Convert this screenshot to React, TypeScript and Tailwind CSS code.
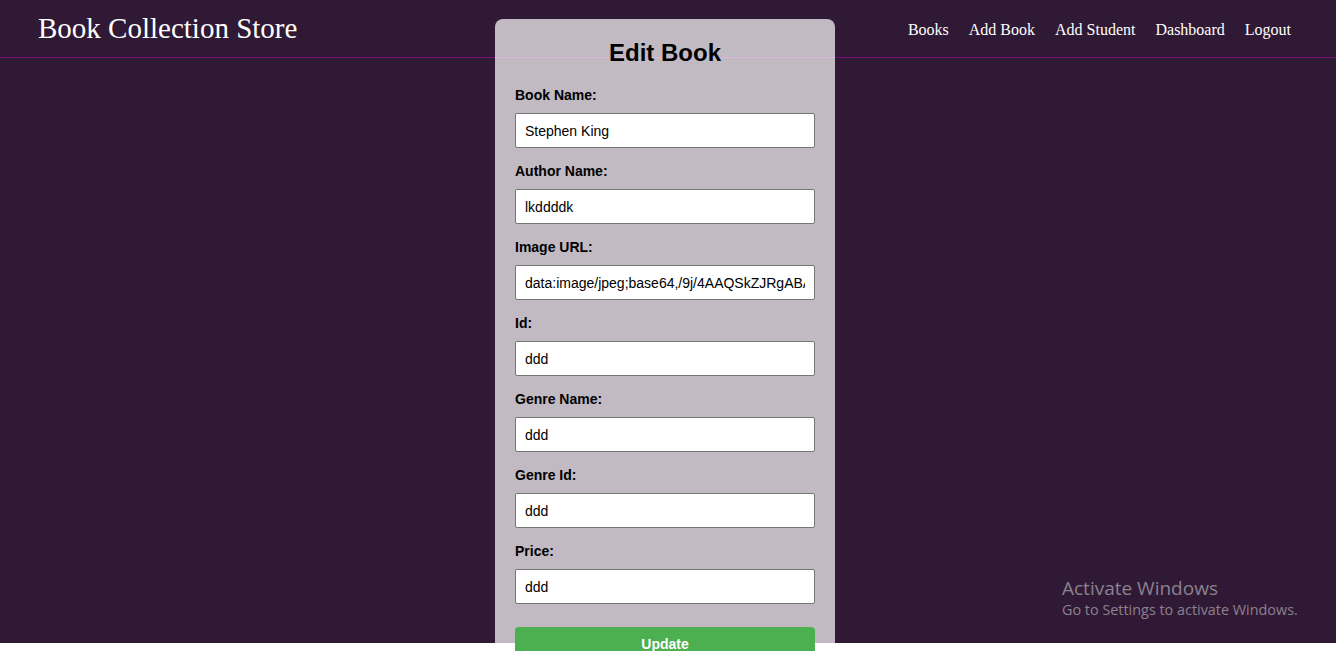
import React from 'react';

const fields = [
  { label: 'Book Name:', value: 'Stephen King' },
  { label: 'Author Name:', value: 'lkddddk' },
  { label: 'Image URL:', value: 'data:image/jpeg;base64,/9j/4AAQSkZJRgABAQAAAQABAAD/2wCEAAkGBxMTEhUTExMWFhUXGBgYGBgYGBgYGBgYGBgYGBgYGBgYHSggGBolHRgYITEhJSkrLi4uFx8zODMtNygtLisBCgoKDg0OGhAQGi0lHyUtLS0tLS0tLS0tLS0tLS0tLS0tLS0tLS0tLS0tLS0tLS0tLS0tLS0tLS0tLS0tLS0tLf' },
  { label: 'Id:', value: 'ddd' },
  { label: 'Genre Name:', value: 'ddd' },
  { label: 'Genre Id:', value: 'ddd' },
  { label: 'Price:', value: 'ddd' },
];

function Navbar() {
  const links = ['Books', 'Add Book', 'Add Student', 'Dashboard', 'Logout'];
  return (
    <nav className="h-[58px] border-b border-[#7a0f7a] flex items-center justify-between pl-[38px] pr-[45px] font-['Liberation_Serif',serif] text-white">
      <div className="text-[29px] leading-none">Book Collection Store</div>
      <ul className="flex gap-[20px] text-[16px] pt-[2px]">
        {links.map((l) => (
          <li key={l}>{l}</li>
        ))}
      </ul>
    </nav>
  );
}

function EditBook() {
  return (
    <div className="flex justify-center pr-[6px]">
      <div className="w-[340px] -mt-[39px] rounded-[8px] bg-white/70 p-[20px] font-['Liberation_Sans',Arial,sans-serif] text-black relative">
        <h2 className="text-[24px] font-bold text-center leading-[28px] mb-[20px]">Edit Book</h2>
        {fields.map((f) => (
          <div key={f.label} className="mb-[15px]">
            <label className="block text-[14px] font-bold leading-[16px] mb-[10px]">{f.label}</label>
            <input
              readOnly
              value={f.value}
              className="w-full h-[35px] bg-white border border-[#767676] rounded-[2px] px-[9px] text-[14px] outline-none"
            />
          </div>
        ))}
        <button className="mt-[8px] w-full h-[35px] bg-[#4caf50] text-white text-[14px] font-bold rounded-[4px]">
          Update
        </button>
      </div>
    </div>
  );
}

export default function App() {
  return (
    <div className="bg-white min-h-[651px] overflow-hidden">
      <div className="h-[643px] bg-[#301934] relative">
        <Navbar />
        <EditBook />
        <div className="absolute left-[1062px] top-[576px] font-['Open_Sans','Noto_Sans',sans-serif] text-[#8b8190]">
          <div className="text-[19px] leading-[24px]">Activate Windows</div>
          <div className="text-[14.4px] leading-[20px]">Go to Settings to activate Windows.</div>
        </div>
      </div>
    </div>
  );
}
